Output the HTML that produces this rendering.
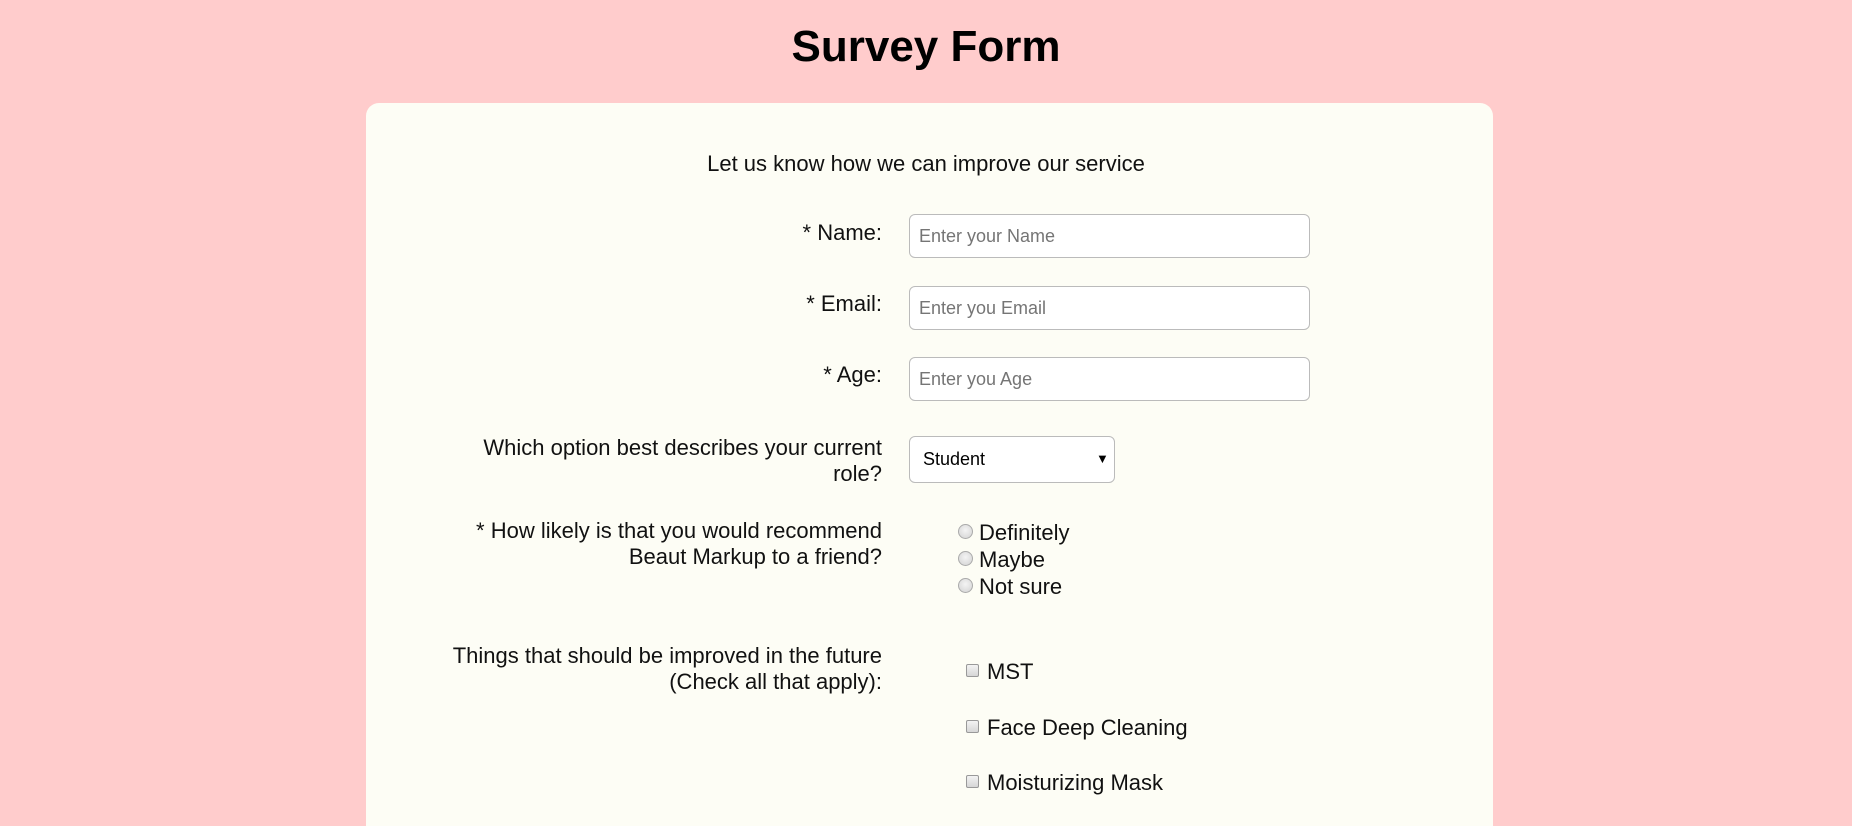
<!DOCTYPE html>
<html style="width:1852px;height:826px;overflow:hidden"><head><meta charset="utf-8"><style>
*{margin:0;padding:0;box-sizing:border-box}
body{width:1852px;height:826px;overflow:hidden;background:#ffcccc;font-family:"Liberation Sans",Arial,sans-serif;color:#111;position:relative}
.a{position:absolute;white-space:nowrap}
h1{position:absolute;left:0;width:1852px;top:20px;text-align:center;font-size:44px;font-weight:bold;line-height:54px;color:#000}
.card{position:absolute;left:366px;top:103px;width:1127px;height:723px;background:#fdfdf5;border-radius:13px 13px 0 0}
.lbl{position:absolute;right:970px;text-align:right;font-size:22px;line-height:26px;white-space:nowrap}
.inp{position:absolute;left:909px;width:401px;height:44px;background:#fff;border:1px solid #bbb;border-radius:6px;font-size:18px;color:#757575;padding:0 0 0 9px;line-height:42px}
.rad{position:absolute;left:958px;width:15px;height:15px;border-radius:50%;border:1px solid #aaa;background:radial-gradient(circle at 50% 40%,#f4f4f4,#d2d2d2)}
.chk{position:absolute;left:966px;width:13px;height:13px;border-radius:2px;border:1px solid #999;background:linear-gradient(#f3f3f3,#d6d6d6)}
.opt{position:absolute;font-size:22px;line-height:26px;white-space:nowrap}
</style></head><body>
<h1>Survey Form</h1>
<div class="card"></div>
<div class="a" style="left:0;width:1852px;text-align:center;top:151px;font-size:22px;line-height:26px">Let us know how we can improve our service</div>

<div class="lbl" style="top:220px">* Name:</div>
<div class="inp" style="top:214px">Enter your Name</div>
<div class="lbl" style="top:291px">* Email:</div>
<div class="inp" style="top:286px">Enter you Email</div>
<div class="lbl" style="top:362px">* Age:</div>
<div class="inp" style="top:357px">Enter you Age</div>

<div class="lbl" style="top:435px">Which option best describes your current<br>role?</div>
<div class="a" style="left:909px;top:436px;width:206px;height:47px;background:#fff;border:1px solid #bbb;border-radius:6px"></div>
<div class="a" style="left:923px;top:448px;font-size:18px;line-height:22px;color:#000">Student</div>
<div class="a" style="left:1096px;top:449px;font-size:13px;line-height:20px;color:#000">▼</div>

<div class="lbl" style="top:518px">* How likely is that you would recommend<br>Beaut Markup to a friend?</div>
<div class="rad" style="top:524px"></div><div class="opt" style="left:979px;top:520px">Definitely</div>
<div class="rad" style="top:551px"></div><div class="opt" style="left:979px;top:547px">Maybe</div>
<div class="rad" style="top:578px"></div><div class="opt" style="left:979px;top:574px">Not sure</div>

<div class="lbl" style="top:643px">Things that should be improved in the future<br>(Check all that apply):</div>
<div class="chk" style="top:664px"></div><div class="opt" style="left:987px;top:659px">MST</div>
<div class="chk" style="top:720px"></div><div class="opt" style="left:987px;top:715px">Face Deep Cleaning</div>
<div class="chk" style="top:775px"></div><div class="opt" style="left:987px;top:770px">Moisturizing Mask</div>
</body></html>
